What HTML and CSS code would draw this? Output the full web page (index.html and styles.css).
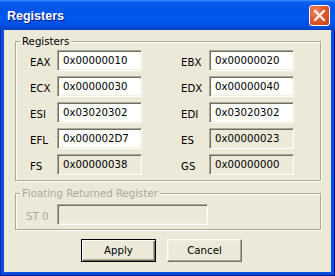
FILE: index.html
```html
<!DOCTYPE html>
<html lang="en">
<head>
  <meta charset="UTF-8" />
  <title>Registers</title>
  <link rel="stylesheet" href="styles.css">
</head>
<body>

  <div class="window">
    <div class="titlebar">
      <span class="title">Registers</span>
      <span class="close">
        <svg width="19" height="19" viewBox="0 0 19 19">
          <path d="M5 5 L14 14 M14 5 L5 14" stroke="#fff" stroke-width="2" stroke-linecap="square" />
        </svg>
      </span>
    </div>

    <div class="client">
      <fieldset class="group regs-group">
        <legend>Registers</legend>
        <div class="regs">
          <span class="lbl">EAX</span><div class="edit">0x00000010</div>
          <span class="lbl">EBX</span><div class="edit">0x00000020</div>
          <span class="lbl">ECX</span><div class="edit">0x00000030</div>
          <span class="lbl">EDX</span><div class="edit">0x00000040</div>
          <span class="lbl">ESI</span><div class="edit">0x03020302</div>
          <span class="lbl">EDI</span><div class="edit">0x03020302</div>
          <span class="lbl">EFL</span><div class="edit">0x000002D7</div>
          <span class="lbl">ES</span><div class="edit ro">0x00000023</div>
          <span class="lbl">FS</span><div class="edit ro">0x00000038</div>
          <span class="lbl">GS</span><div class="edit ro">0x00000000</div>
        </div>
      </fieldset>

      <fieldset class="group fpu-group">
        <legend>Floating Returned Register</legend>
        <div class="st-row">
          <span class="lbl">ST 0</span>
          <div class="edit ro wide"></div>
        </div>
      </fieldset>

      <div class="buttons">
        <button class="btn default">Apply</button>
        <button class="btn">Cancel</button>
      </div>
    </div>
  </div>

</body>
</html>
```

FILE: styles.css
```css
* {
  box-sizing: border-box;
  margin: 0;
  padding: 0;
}

body {
  background: #fff;
  font-family: "DejaVu Sans", sans-serif;
  font-size: 10.2px;
  color: #000;
}

.window {
  width: 335px;
  height: 276px;
  display: flex;
  flex-direction: column;
  padding: 0 4px 4px;
  background: #0a4fdc;
  box-shadow: inset 1px 0 #0026b0, inset -1px 0 #00138c, inset 0 -1px #00138c;
}

.titlebar {
  height: 30px;
  margin: 0 -4px;
  padding: 0 5px 0 7px;
  display: flex;
  align-items: center;
  justify-content: space-between;
  background: linear-gradient(to bottom,
    #3d95ff 0, #0a5ff0 7%, #0055ea 30%, #0058ee 60%, #004fe0 85%, #0042c8 100%);
}

.title {
  color: #fff;
  font: bold 12.5px "Liberation Sans", sans-serif;
  text-shadow: 1px 1px #0a1883;
  padding-top: 1px;
}

.close {
  width: 21px;
  height: 21px;
  border: 1px solid #fff;
  border-radius: 3px;
  background: radial-gradient(circle at 30% 30%, #ee8a68 0, #e05a2e 45%, #c8401a 100%);
  display: flex;
  align-items: center;
  justify-content: center;
}

.client {
  flex: 1;
  background: #ece9d8;
  padding: 5px 10px 0 11px;
}

/* etched group boxes */
.group {
  border: 1px solid #aca899;
  box-shadow: inset 1px 1px #fff, 1px 1px #fff;
}

.group legend {
  background: #ece9d8;
  line-height: 13px;
  padding: 0 2px;
}

.regs-group {
  padding: 2px 0 5px 14px;
}

.regs-group legend {
  margin-left: -10px;
}

.regs {
  display: grid;
  grid-template-columns: 27px 124px 28px 85px;
  grid-auto-rows: 21px;
  row-gap: 5px;
}

.lbl {
  line-height: 13px;
  padding-top: 6px;
  white-space: nowrap;
}

.edit {
  width: 85px;
  height: 21px;
  padding: 3px 5px;
  line-height: 13px;
  background: #fff;
  border: 1px solid;
  border-color: #aca899 #fff #fff #aca899;
  box-shadow: inset 1px 1px #716f64, inset -1px -1px #f1efe2;
  white-space: nowrap;
}

.edit.ro {
  background: #ece9d8;
}

.fpu-group {
  margin-top: 6px;
  padding: 4px 0 4px 10px;
  color: #aca899;
}

.fpu-group legend {
  margin-left: -6px;
}

.st-row {
  display: flex;
}

.st-row .lbl {
  width: 31px;
}

.edit.wide {
  width: 151px;
}

.buttons {
  display: flex;
  gap: 11px;
  margin: 9px 0 0 66px;
}

.btn {
  width: 75px;
  height: 23px;
  font: inherit;
  color: #000;
  background: #ece9d8;
  border: 1px solid;
  border-color: #fff #716f64 #716f64 #fff;
  box-shadow: inset -1px -1px #aca899, inset 1px 1px #f1efe2;
}

.btn.default {
  border-color: #000;
  box-shadow: inset 1px 1px #fff, inset -1px -1px #716f64, inset -2px -2px #aca899;
}
```
